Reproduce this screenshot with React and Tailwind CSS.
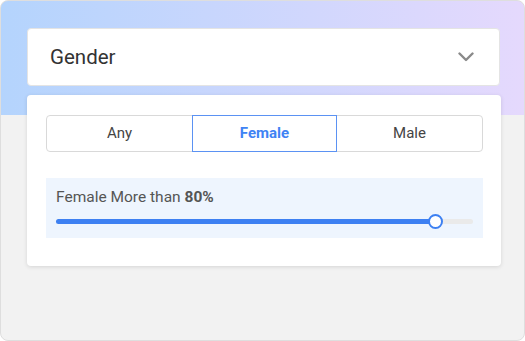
export default function App() {
  const options = ["Any", "Female", "Male"];
  const active = "Female";

  return (
    <div className="w-[525px] h-[341px] bg-white" style={{ fontFamily: "Roboto, 'Liberation Sans', sans-serif" }}>
      <div className="w-[525px] h-[341px] rounded-lg border border-[#dedede] bg-[#f2f2f2] bg-[linear-gradient(90deg,#b4d4fd,#e5d9fd)] bg-no-repeat bg-[length:100%_114px] pt-[27px] pl-[26px] pr-[23px] overflow-hidden">
        {/* Header select */}
        <div className="h-[58px] w-[473px] rounded border border-[#e4e4e4] bg-white flex items-center justify-between pl-[22px] pr-[25px]">
          <span className="text-[20.5px] text-[#333]">Gender</span>
          <svg width="16" height="10" viewBox="0 0 16 10" fill="none">
            <path d="M1.5 1.5L8 8L14.5 1.5" stroke="#8a8a8a" strokeWidth="2.4" strokeLinecap="round" strokeLinejoin="round" />
          </svg>
        </div>

        {/* Panel */}
        <div className="mt-[9px] w-[474px] h-[171px] rounded bg-white shadow-[0_1px_4px_rgba(0,0,0,0.12)] pt-[20px] pl-[19px] pr-[18px]">
          <div className="flex h-[37px] rounded border border-[#d9d9d9]">
            {options.map((o) => (
              <div
                key={o}
                className={
                  o === active
                    ? "flex-1 flex items-center justify-center -my-px bg-white shadow-[inset_0_0_0_1px_#5b92f3] text-[15px] font-bold text-[#3f83f4]"
                    : "flex-1 flex items-center justify-center text-[15px] text-[#444]"
                }
              >
                {o}
              </div>
            ))}
          </div>

          {/* Slider box */}
          <div className="mt-[26px] h-[60px] bg-[#eef5fe] px-[10px] pt-[8px]">
            <div className="text-[15.5px] text-[#555] leading-[22px]">
              Female More than <span className="font-bold">80%</span>
            </div>
            <div className="relative mt-[11px] h-[5px] rounded-full bg-[#eaeaea]">
              <div className="h-[5px] w-[379px] rounded-full bg-[#3d80f2]" />
              <div className="absolute left-[372px] top-[-5px] w-[15px] h-[15px] rounded-full bg-white border-[2.5px] border-[#3d80f2]" />
            </div>
          </div>
        </div>
      </div>
    </div>
  );
}
